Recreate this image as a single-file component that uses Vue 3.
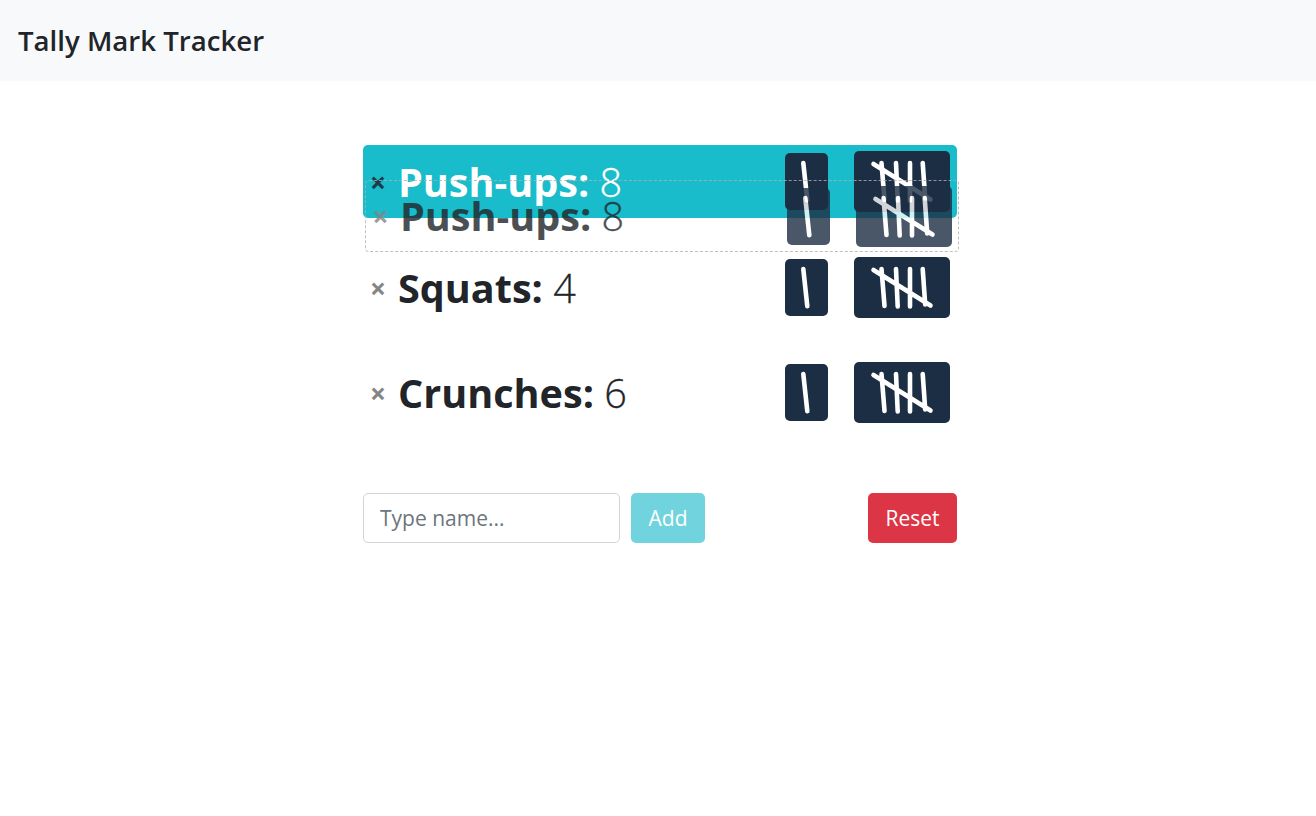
<template>
    <div class="app">
        <header class="navbar">
            <h1 class="brand">Tally Mark Tracker</h1>
        </header>

        <main class="tracker">
            <ul class="list">
                <!-- the row being dragged, sits under its own drop placeholder -->
                <li class="row row-drag">
                    <button class="remove">×</button>
                    <span class="label"><b>{{ exercises[0].name }}:</b> {{ exercises[0].count }}</span>
                    <button class="tally tally-one" @click="exercises[0].count += 1">
                        <svg width="43" height="57" viewBox="0 0 43 57"><path :d="onePath" /></svg>
                    </button>
                    <button class="tally tally-five" @click="exercises[0].count += 5">
                        <svg width="96" height="61" viewBox="0 0 96 61"><path :d="fivePath" /></svg>
                    </button>
                </li>
                <li
                    v-for="(item, i) in exercises"
                    :key="item.name"
                    class="row"
                    :class="{ 'row-ghost': i == 0 }"
                >
                    <button class="remove" @click="exercises.splice(i, 1)">×</button>
                    <span class="label"><b>{{ item.name }}:</b> {{ item.count }}</span>
                    <button class="tally tally-one" @click="item.count += 1">
                        <svg width="43" height="57" viewBox="0 0 43 57"><path :d="onePath" /></svg>
                    </button>
                    <button class="tally tally-five" @click="item.count += 5">
                        <svg width="96" height="61" viewBox="0 0 96 61"><path :d="fivePath" /></svg>
                    </button>
                </li>
            </ul>

            <form class="add-form" @submit.prevent="addExercise">
                <input v-model="newName" class="name-input" type="text" placeholder="Type name..." />
                <button class="btn btn-add" type="submit">Add</button>
                <button class="btn btn-reset" type="button" @click="reset">Reset</button>
            </form>
        </main>
    </div>
</template>

<script setup>
import { ref } from "vue";

const onePath = "M18.3 10L22.3 47.3";
const fivePath =
    "M27.5 12L30.5 49M42 12L43.7 49.5M56 12L56 49.5M68.7 12L71.2 47.5M19.5 13L76.5 48.5";

const exercises = ref([
    { name: "Push-ups", count: 8 },
    { name: "Squats", count: 4 },
    { name: "Crunches", count: 6 },
]);
const newName = ref("");

function addExercise() {
    if (!newName.value) return;
    exercises.value.push({ name: newName.value, count: 0 });
    newName.value = "";
}

function reset() {
    exercises.value.forEach((item) => (item.count = 0));
}
</script>

<style>
body {
    background: #fff;
}
</style>

<style scoped>
.app {
    font-family: "Open Sans", sans-serif;
    color: #212529;
}

.navbar {
    height: 81px;
    padding: 0 18px;
    background: #f8f9fa;
    display: flex;
    align-items: center;
}

.brand {
    margin: 0 0 2px;
    font-size: 27.6px;
    font-weight: 600;
}

.tracker {
    width: 594px;
    margin-left: 363px;
    padding-top: 99px;
}

.list {
    position: relative;
    list-style: none;
    margin: 0;
    padding: 0;
}

.row {
    height: 71px;
    margin-bottom: 34px;
    display: flex;
    align-items: center;
    box-sizing: border-box;
}

.row-drag {
    position: absolute;
    top: -35px;
    left: 0;
    width: 100%;
    height: 73px;
    margin: 0;
    background: #18bcca;
    border-radius: 5px;
    color: #fff;
}

.row-ghost {
    height: 72px;
    margin: 0 -2px 0 2px;
    border: 1px dashed #b0b0b0;
    border-radius: 4px;
    opacity: 0.8;
}

.remove {
    width: 30px;
    padding: 0;
    border: none;
    background: none;
    color: #858585;
    font: 700 28px "Open Sans", sans-serif;
    cursor: pointer;
}

.row-drag .remove {
    color: #1c3a4a;
}

.row-ghost .remove {
    width: 29px;
}

.label {
    margin-left: 5px;
    font-size: 39.6px;
    font-weight: 300;
    flex: 1;
    -webkit-text-stroke: 0.3px currentColor;
}

.label b {
    font-weight: 700;
    -webkit-text-stroke: 0;
}

.tally {
    padding: 0;
    border: none;
    border-radius: 5px;
    background: #1c2e44;
    display: block;
    cursor: pointer;
}

.tally svg {
    display: block;
    fill: none;
    stroke: #fff;
    stroke-width: 4.6;
    stroke-linecap: round;
}

.tally-one {
    width: 43px;
    height: 57px;
}

.tally-five {
    width: 96px;
    height: 61px;
    margin: 0 7px 0 26px;
}

.row-ghost .tally-five {
    margin-right: 6px;
}

.add-form {
    margin-top: 65px;
    display: flex;
    align-items: center;
}

.name-input {
    width: 257px;
    height: 50px;
    box-sizing: border-box;
    padding: 0 16px;
    border: 1px solid #ced4da;
    border-radius: 5px;
    color: #495057;
    font: 400 21px "Open Sans", sans-serif;
}

.name-input::placeholder {
    color: #6c757d;
}

.btn {
    height: 50px;
    padding: 0;
    border: none;
    border-radius: 5px;
    color: #fff;
    font: 400 21px "Open Sans", sans-serif;
    cursor: pointer;
}

.btn-add {
    width: 74px;
    margin-left: 11px;
    background: #70d3dd;
}

.btn-reset {
    width: 89px;
    margin-left: auto;
    background: #dc3545;
}
</style>
